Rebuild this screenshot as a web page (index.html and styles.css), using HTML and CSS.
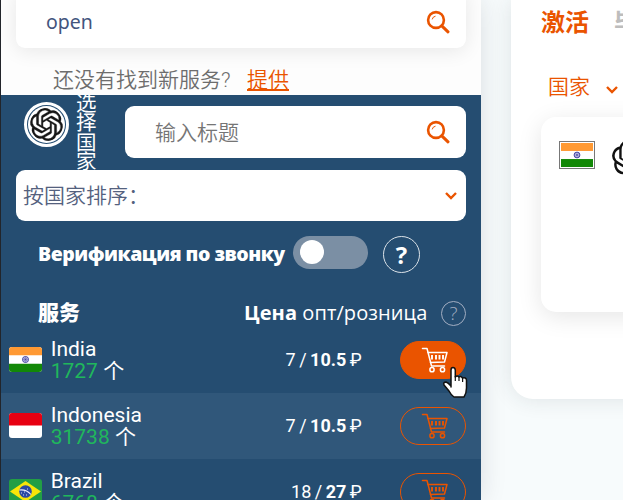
FILE: index.html
```html
<!DOCTYPE html>
<html lang="zh">
<head>
<meta charset="utf-8">
<title>Services</title>
<link rel="stylesheet" href="styles.css">
</head>
<body>
<svg class="defs" width="0" height="0">
  <symbol id="search" viewBox="0 0 24 24"><circle cx="10" cy="10" r="7.9" fill="none" stroke="currentColor" stroke-width="2.6"/><path d="M6.2 9.4Q6.7 6.6 9.5 6.2" fill="none" stroke="currentColor" stroke-width="1"/><path d="M15.8 15.8L22 21.8" stroke="currentColor" stroke-width="3" stroke-linecap="round"/></symbol>
  <symbol id="chevron" viewBox="0 0 12 8"><path d="M1 1l5 5 5-5" fill="none" stroke="currentColor" stroke-width="2.4"/></symbol>
  <symbol id="cart" viewBox="0 0 28 26"><g fill="none" stroke="currentColor" stroke-width="1.5" stroke-linejoin="round" stroke-linecap="round"><path d="M1.5 1.5H6L10.5 19H23.5"/><path d="M7 5.5H26L23.5 15L9.5 15.5"/><path d="M11 8v4.5M15 8v4.5M18.5 8v4.5M22 8v4.5" stroke-width="1.9" stroke-linecap="butt"/><circle cx="11" cy="22.7" r="2.1"/><circle cx="21.5" cy="22.7" r="2.1"/></g></symbol>
  <symbol id="knot" viewBox="0 0 24 24"><path fill="currentColor" d="M22.2819 9.8211a5.9847 5.9847 0 0 0-.5157-4.9108 6.0462 6.0462 0 0 0-6.5098-2.9A6.0651 6.0651 0 0 0 4.9807 4.1818a5.9847 5.9847 0 0 0-3.9977 2.9 6.0462 6.0462 0 0 0 .7427 7.0966 5.98 5.98 0 0 0 .511 4.9107 6.051 6.051 0 0 0 6.5146 2.9001A5.9847 5.9847 0 0 0 13.2599 24a6.0557 6.0557 0 0 0 5.7718-4.2058 5.9894 5.9894 0 0 0 3.9977-2.9001 6.0557 6.0557 0 0 0-.7475-7.0729zm-9.022 12.6081a4.4755 4.4755 0 0 1-2.8764-1.0408l.1419-.0804 4.7783-2.7582a.7948.7948 0 0 0 .3927-.6813v-6.7369l2.02 1.1686a.071.071 0 0 1 .038.052v5.5826a4.504 4.504 0 0 1-4.4945 4.4944zm-9.6607-4.1254a4.4708 4.4708 0 0 1-.5346-3.0137l.142.0852 4.783 2.7582a.7712.7712 0 0 0 .7806 0l5.8428-3.3685v2.3324a.0804.0804 0 0 1-.0332.0615L9.74 19.9502a4.4992 4.4992 0 0 1-6.1408-1.6464zM2.3408 7.8956a4.485 4.485 0 0 1 2.3655-1.9728V11.6a.7664.7664 0 0 0 .3879.6765l5.8144 3.3543-2.0201 1.1685a.0757.0757 0 0 1-.071 0l-4.8303-2.7865A4.504 4.504 0 0 1 2.3408 7.872zm16.5963 3.8558L13.1038 8.364 15.1192 7.2a.0757.0757 0 0 1 .071 0l4.8303 2.7913a4.4944 4.4944 0 0 1-.6765 8.1042v-5.6772a.79.79 0 0 0-.407-.667zm2.0107-3.0231l-.142-.0852-4.7735-2.7818a.7759.7759 0 0 0-.7854 0L9.409 9.2297V6.8974a.0662.0662 0 0 1 .0284-.0615l4.8303-2.7866a4.4992 4.4992 0 0 1 6.6802 4.66zM8.3065 12.863l-2.02-1.1638a.0804.0804 0 0 1-.038-.0567V6.0742a4.4992 4.4992 0 0 1 7.3757-3.4537l-.142.0805L8.704 5.459a.7948.7948 0 0 0-.3927.6813zm1.0976-2.3654l2.602-1.4998 2.6069 1.4998v2.9994l-2.5974 1.4997-2.6067-1.4997Z"/></symbol>
  <symbol id="india" viewBox="0 0 33 25" preserveAspectRatio="none"><path fill="#fff" d="M0 0h33v25H0z"/><path fill="#ff9933" d="M0 0h33v8.3H0z"/><path fill="#128807" d="M0 16.7h33V25H0z"/><circle cx="16.5" cy="12.5" r="3" fill="#d8d8ef" stroke="#3c3ca0"/><path d="M14 12.5h5M16.5 10v5M14.8 10.8l3.4 3.4M18.2 10.8l-3.4 3.4" stroke="#3c3ca0" stroke-width=".5"/></symbol>
</svg>
<main class="page">
  <section class="services">
    <div class="finder">
      <div class="box search-main"><span>open</span><svg class="ic-search"><use href="#search"/></svg></div>
      <p class="hint"><span>还没有找到新服务?</span><a>提供</a></p>
    </div>
    <div class="countries">
      <div class="top">
        <div class="logo"><svg><use href="#knot"/></svg></div>
        <div class="pick">选择国家</div>
        <div class="box search-title"><span>输入标题</span><svg class="ic-search"><use href="#search"/></svg></div>
      </div>
      <div class="box select"><span>按国家排序：</span><svg class="ic-chev"><use href="#chevron"/></svg></div>
      <div class="verify"><b>Верификация по звонку</b><span class="toggle"><i></i></span><span class="help">?</span></div>
      <div class="head"><b class="cn">服务</b><span class="price-h"><b>Цена</b> опт/розница</span><span class="help-sm">?</span></div>
      <div class="row">
        <svg class="flag"><use href="#india"/></svg>
        <div class="name">India<div><em>1727</em> 个</div></div>
        <div class="price">7 / <b>10.5</b> ₽</div>
        <div class="buy active"><svg><use href="#cart"/></svg>
          <svg class="cursor" viewBox="0 0 26 33"><path d="M9 21V4Q9 1.5 11 1.5T13.3 4V11Q15 9 17 11Q19 9.500 20.500 12Q24 11 24.500 14V22Q24.500 27 22 31H12Q9 29 7 25L2 19Q1 16 4 16Q6 16.500 9 20Z" fill="#fff" stroke="#111" stroke-width="1.5" stroke-linejoin="round"/><path d="M13.300 10v5M17 11v4M20.600 12v4" stroke="#111" stroke-width="1.200"/></svg>
        </div>
      </div>
      <div class="row alt">
        <svg class="flag" viewBox="0 0 33 25"><path fill="#fff" d="M0 0h33v25H0z"/><path fill="#e70011" d="M0 0h33v12.500H0z"/></svg>
        <div class="name">Indonesia<div><em>31738</em> 个</div></div>
        <div class="price">7 / <b>10.5</b> ₽</div>
        <div class="buy"><svg><use href="#cart"/></svg></div>
      </div>
      <div class="row">
        <svg class="flag" viewBox="0 0 33 25"><path fill="#229e45" d="M0 0h33v25H0z"/><path fill="#f8e509" d="M16.500 2L32 12.500 16.500 23 1 12.500z"/><circle cx="16.500" cy="12.500" r="6.300" fill="#2b49a3"/><path d="M10.500 11Q17 10 22 15.500" fill="none" stroke="#eef" stroke-width="1.100"/><path d="M12 14h1M14 16h1M17 16h1M18 10h1M15 13h1" stroke="#fff" stroke-width=".8"/></svg>
        <div class="name">Brazil<div><em>6768</em> 个</div></div>
        <div class="price">18 / <b>27</b> ₽</div>
        <div class="buy"><svg><use href="#cart"/></svg></div>
      </div>
    </div>
  </section>
  <section class="active-panel">
    <div class="tabs"><b>激活</b><b class="off">毕业</b></div>
    <div class="filter"><span>国家</span><svg class="ic-chev"><use href="#chevron"/></svg></div>
    <div class="order"><div class="flag-frame"><svg><use href="#india"/></svg></div><svg class="order-logo"><use href="#knot"/></svg></div>
  </section>
</main>
</body>
</html>
```
FILE: styles.css
```css
* { box-sizing: border-box; }
body { margin: 0; background: #f7fbfc; font-family: Roboto, "Noto Sans CJK SC", sans-serif; }
.defs { display: block; width: 0; height: 0; }
.page { display: flex; gap: 30px; width: 623px; height: 500px; overflow: hidden; border-left: 1px solid #22252b; }
.services { width: 480px; height: 500px; flex: none; background: #fff; box-shadow: 0 0 24px rgba(30, 30, 50, .13); overflow: visible; }
.finder { height: 95px; padding: 0 15px; overflow: hidden; background: #fdfdfd; }
.box { display: flex; align-items: center; justify-content: space-between; background: #fff; border-radius: 9px; font-size: 21px; font-weight: 350; color: #757575; }
.search-main { height: 60px; margin-top: -12px; padding: 8px 16px 0 30px; color: #43557e; font-family: "Noto Sans", sans-serif; font-weight: 400; box-shadow: 0 3px 20px rgba(0, 0, 0, .09); }
.search-main span { font-size: 19.5px; margin-top: -2px; }
.ic-search { width: 24px; height: 24px; color: #ea5400; }
.ic-chev { width: 12px; height: 8px; color: #ea5400; }
.hint { display: flex; gap: 14px; margin: 17px 0 0 37px; font-size: 21px; line-height: 30px; color: #6d6d6d; font-weight: 350; }
.hint span { width: 180px; white-space: nowrap; }
.hint a { color: #ea5400; text-decoration: underline; text-decoration-thickness: 2px; text-underline-offset: 2px; }
.countries { height: 405px; background: #254d71; overflow: hidden; color: #fff; }
.top { display: flex; height: 75px; padding: 0 15px 0 23px; }
.logo { width: 45px; height: 45px; margin-top: 7px; border-radius: 50%; background: #254d71; border: 3px solid #fff; padding: 1px; color: #171717; flex: none; }
.logo svg { display: block; width: 37px; height: 37px; padding: 2px; border-radius: 50%; background: #fff; stroke: #171717; stroke-width: .3; }
.pick { width: 21px; height: 76px; margin: 0 28px 0 7px; flex: none; font-size: 20.5px; line-height: 19.3px; word-break: break-all; }
.search-title { flex: 1; height: 52px; margin-top: 11px; padding: 0 16px 0 30px; }
.search-title span { margin-top: -2px; }
.select { position: relative; height: 51px; margin: 0 15px; padding: 0 9px 0 7px; color: #54617e; }
.select span { margin-top: -3px; }
.verify { display: flex; align-items: center; height: 68px; padding-left: 37px; font: 700 19.5px "Open Sans", sans-serif; }
.verify b { width: 248px; margin-top: -4px; white-space: nowrap; letter-spacing: -.5px; }
.toggle { width: 75px; height: 33px; margin: -6px 15px 0 7px; padding: 4px 7px; border-radius: 17px; background: #7b8fa4; }
.toggle i { display: block; width: 24px; height: 24px; border-radius: 50%; background: #fff; }
.help, .help-sm { display: flex; align-items: center; justify-content: center; border-radius: 50%; }
.help { width: 37px; height: 37px; margin-top: -1px; border: 1px solid #dbe2e8; font-size: 24px; }
.head { display: flex; align-items: center; height: 38px; padding: 10px 15px 0 38px; font-family: "Open Sans", "Noto Sans CJK SC", sans-serif; }
.cn { width: 205px; margin: -5px 0 0 -1px; font-size: 21px; font-weight: 900; }
.price-h { width: 185px; margin: -2px 0 0 1px; white-space: nowrap; font-size: 20px; letter-spacing: .08px; }
.help-sm { width: 25px; height: 25px; margin-left: auto; border: 1.5px solid #a3aec2; color: #a3aec2; font-size: 19px; font-weight: 300; }
.row { display: flex; height: 66px; padding: 0 15px 0 8px; }
.row.alt { background: #30577a; }
.flag { width: 33px; height: 25px; margin: 20px 9px 0 0; border-radius: 3px; flex: none; }
.name { width: 180px; margin-left: -.3px; padding-top: 11px; font-size: 21px; line-height: 22px; white-space: nowrap; }
.name em { font-style: normal; color: #20b75c; }
.price { width: 131px; padding-top: 20px; text-align: right; font-size: 18px; line-height: 26px; word-spacing: -1px; white-space: nowrap; }
.price b { font-weight: 700; }
.buy { position: relative; width: 66px; height: 38px; margin: 14px 0 0 auto; padding: 5px 0 0 20px; border: 1px solid #ea5400; border-radius: 19px; color: #ea5400; }
.buy svg { display: block; width: 28px; height: 26px; }
.buy.active { background: #ea5400; color: #fff; }
.buy .cursor { position: absolute; left: 41px; top: 24px; width: 26px; height: 33px; }
.active-panel { width: 300px; height: 399px; padding: 0 30px; flex: none; border-radius: 0 0 22px 22px; background: #fff; box-shadow: 0 0 22px rgba(30, 50, 60, .12); }
.tabs { display: flex; gap: 25px; height: 72px; font-size: 24px; line-height: 47px; color: #ea5400; }
.tabs .off { color: #bdbdbd; }
.filter { display: flex; align-items: center; gap: 15px; height: 45px; padding: 0 0 15px 7px; color: #ea5400; font-size: 21px; font-weight: 350; }
.filter span { margin-top: -4px; }
.filter svg { margin: 5px 0 0 1px; }
.order { display: flex; height: 195px; padding: 24px 18px; border-radius: 15px; background: #fff; box-shadow: 0 5px 25px rgba(0, 0, 0, .1); }
.flag-frame { width: 36px; height: 28px; border: 1px solid #777; padding: 1px; flex: none; }
.flag-frame svg { display: block; width: 32px; height: 24px; }
.order-logo { width: 37px; height: 37px; margin: -1px 0 0 17px; flex: none; color: #111; }
```
